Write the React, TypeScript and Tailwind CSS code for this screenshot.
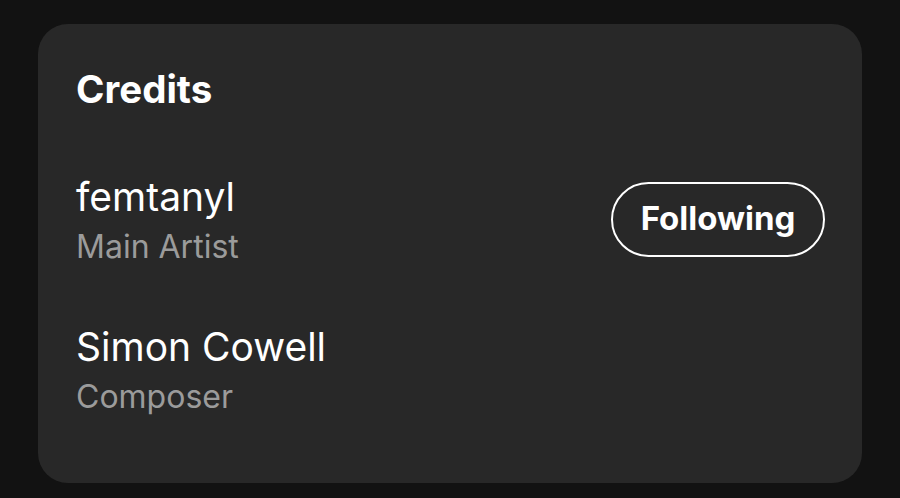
export default function App() {
  const credits = [
    { name: 'femtanyl', role: 'Main Artist', following: true },
    { name: 'Simon Cowell', role: 'Composer', following: false },
  ]

  return (
    <div className="w-[900px] h-[498px] bg-[#121212] px-[38px] pt-[24px] pb-[15px] font-['Inter',sans-serif]">
      <div className="h-full rounded-[30px] bg-[#282828] pl-[38px] pr-[37px] pt-[46px]">
        <h2 className="text-[38.5px] leading-[38px] font-bold text-white">Credits</h2>
        <div className="mt-[64px] flex flex-col gap-[50px]">
          {credits.map((c) => (
            <div key={c.name} className="flex items-center justify-between">
              <div className="flex flex-col">
                <span className="text-[39px] leading-[50px] text-white">{c.name}</span>
                <span className="text-[32px] leading-[50px] text-[#9b9b9b]">{c.role}</span>
              </div>
              {c.following && (
                <button className="mb-[6px] h-[75px] w-[214px] rounded-full border-2 border-white text-[33px] font-bold text-white">
                  Following
                </button>
              )}
            </div>
          ))}
        </div>
      </div>
    </div>
  )
}
